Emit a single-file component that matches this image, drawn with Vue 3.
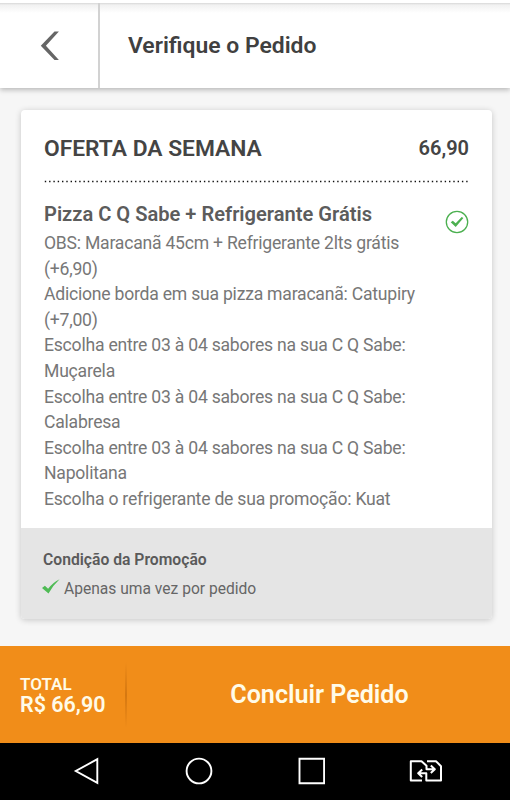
<template>
  <div class="screen">
    <header class="topbar">
      <button class="back" aria-label="Voltar">
        <svg width="20" height="32" viewBox="0 0 20 32">
          <path d="M18.900 1.500H14.500L.8 15.700 14.500 30h4.400L5.900 15.700z" fill="#666" />
        </svg>
      </button>
      <h1 class="title">Verifique o Pedido</h1>
    </header>

    <main class="content">
      <section class="card">
        <div class="card-body">
          <div class="offer">
            <h2 class="offer-name">OFERTA DA SEMANA</h2>
            <span class="offer-price">{{ total }}</span>
          </div>
          <svg class="dots" width="425" height="3" viewBox="0 0 425 3">
            <path d="M.8 1.500H425" stroke="#111" stroke-width="1.4" stroke-dasharray="1.4 2.9" />
          </svg>

          <div class="item">
            <h3 class="item-name">Pizza C Q Sabe + Refrigerante Grátis</h3>
            <svg class="item-check" width="24" height="24" viewBox="0 0 24 24">
              <circle cx="12" cy="12" r="10.7" fill="none" stroke="#4cb050" stroke-width="1.3" />
              <path d="M5.700 12.300l2.100-1.600 2.900 2.500 6-6.100 1.700 1-7.700 8.900z" fill="#4cb050" />
            </svg>
          </div>
          <p v-for="(line, i) in lines" :key="i" class="line">{{ line }}</p>
        </div>

        <div class="promo">
          <h4 class="promo-title">Condição da Promoção</h4>
          <p class="promo-text">
            <svg width="18" height="16" viewBox="0 0 18 16">
              <path d="M0 9l2.900-2.200 3.200 3Q11 3.300 17.600.2 11 6.200 6.500 14.500z" fill="#4fbb55" />
            </svg>
            <span>Apenas uma vez por pedido</span>
          </p>
        </div>
      </section>
    </main>

    <footer class="checkout">
      <div class="total">
        <span class="total-label">TOTAL</span>
        <span class="total-value">R$ {{ total }}</span>
      </div>
      <div class="divider"></div>
      <button class="confirm">Concluir Pedido</button>
    </footer>

    <nav class="navbar">
      <svg width="28" height="30" viewBox="0 0 28 30">
        <path d="M24.300 3.200V26.800L2.800 15z" fill="none" stroke="#fff" stroke-width="1.9" />
      </svg>
      <svg width="28" height="30" viewBox="0 0 28 30">
        <circle cx="14" cy="15" r="12.400" fill="none" stroke="#fff" stroke-width="1.9" />
      </svg>
      <svg width="28" height="30" viewBox="0 0 28 30">
        <path d="M2.500 2.700h24.600v24.600H2.500z" fill="none" stroke="#fff" stroke-width="1.9" />
      </svg>
      <svg width="34" height="30" viewBox="0 0 34 30">
        <g fill="none" stroke="#fff" stroke-width="2" stroke-linejoin="round">
          <path d="M13 24.500H1.800V5.200h10.700l5 4.500v3.500h7M21.800 9.500l4 3.700-4 3.700" />
          <path d="M18 5.200h9l5 5v14.300H17.300v-7.300h-7M13.200 13.500l-4 3.700 4 3.700" />
        </g>
      </svg>
    </nav>
  </div>
</template>

<script setup>
const total = '66,90';

const lines = [
  'OBS: Maracanã 45cm + Refrigerante 2lts grátis',
  '(+6,90)',
  'Adicione borda em sua pizza maracanã: Catupiry',
  '(+7,00)',
  'Escolha entre 03 à 04 sabores na sua C Q Sabe:',
  'Muçarela',
  'Escolha entre 03 à 04 sabores na sua C Q Sabe:',
  'Calabresa',
  'Escolha entre 03 à 04 sabores na sua C Q Sabe:',
  'Napolitana',
  'Escolha o refrigerante de sua promoção: Kuat',
];
</script>

<style>
body {
  margin: 0;
}
</style>

<style scoped>
.screen {
  display: flex;
  flex-direction: column;
  width: 510px;
  height: 800px;
  overflow: hidden;
  background: #f6f6f6;
  font-family: Roboto, 'Liberation Sans', sans-serif;
}

h1,
h2,
h3,
h4,
p {
  margin: 0;
  white-space: nowrap;
}

button {
  padding: 0;
  border: 0;
  background: none;
  font-family: inherit;
}

.topbar {
  display: flex;
  box-sizing: border-box;
  height: 88px;
  border-top: 3px solid #fff;
  background: linear-gradient(#d8d8d8, #f1f1f1 2px, #fff 10px);
  box-shadow: 0 2px 5px rgba(0, 0, 0, 0.25);
}

.back {
  display: flex;
  align-items: center;
  box-sizing: border-box;
  width: 100px;
  padding-left: 40px;
  border-right: 2px solid #d2d2d2;
}

.title {
  padding-left: 28px;
  font-size: 22.900px;
  font-weight: 600;
  line-height: 86px;
  color: #404040;
}

.content {
  height: 558px;
  padding: 22px 18px 0 21px;
  box-sizing: border-box;
}

.card {
  height: 509px;
  border-radius: 4px;
  overflow: hidden;
  background: #fff;
  box-shadow: 0 1px 6px rgba(0, 0, 0, 0.2);
}

.card-body {
  box-sizing: border-box;
  height: 418px;
  padding: 22px 23px 0 23px;
}

.offer {
  display: flex;
  justify-content: space-between;
  height: 48px;
  line-height: 32px;
  color: #444;
}

.offer-name {
  font-size: 22.800px;
  font-weight: 600;
  line-height: 34px;
}

.offer-price {
  font-size: 20px;
  font-weight: 600;
}

.dots {
  display: block;
}

.item {
  display: flex;
  justify-content: space-between;
  height: 48px;
}

.item-name {
  padding-top: 18px;
  font-size: 20.100px;
  font-weight: 600;
  line-height: 26px;
  color: #5c5c5c;
}

.item-check {
  margin-top: 27px;
}

.line {
  font-size: 17.600px;
  line-height: 25.600px;
  letter-spacing: -0.230px;
  color: #777;
}

.promo {
  height: 91px;
  box-sizing: border-box;
  padding: 20px 22px 0;
  background: #e5e5e5;
  color: #5a5a5a;
}

.promo-title {
  font-size: 15.700px;
  font-weight: 600;
  line-height: 24px;
}

.promo-text {
  display: flex;
  align-items: center;
  gap: 3px;
  margin-top: 5px;
  font-size: 15.600px;
  line-height: 24px;
  color: #666;
}

.promo-text svg {
  margin: -4px 0 0 -1px;
}

.promo-text span {
  margin-left: 1px;
}

.checkout {
  display: flex;
  align-items: center;
  height: 97px;
  background: #f18d19;
  color: #fffbe8;
}

.total {
  display: flex;
  flex-direction: column;
  width: 105px;
  padding-left: 20px;
  font-weight: 600;
}

.total-label {
  font-size: 17px;
  line-height: 20px;
}

.total-value {
  font-size: 21.500px;
  line-height: 21px;
}

.divider {
  width: 2px;
  height: 66px;
  background: linear-gradient(rgba(160, 80, 0, 0), rgba(160, 80, 0, 0.35), rgba(160, 80, 0, 0));
}

.confirm {
  flex: 1;
  padding-left: 2px;
  font-size: 25.100px;
  font-weight: 600;
  color: #fffbe8;
}

.navbar {
  display: flex;
  justify-content: space-between;
  align-items: center;
  box-sizing: border-box;
  height: 57px;
  padding: 0 67px 1px 73px;
  background: #000;
}
</style>
